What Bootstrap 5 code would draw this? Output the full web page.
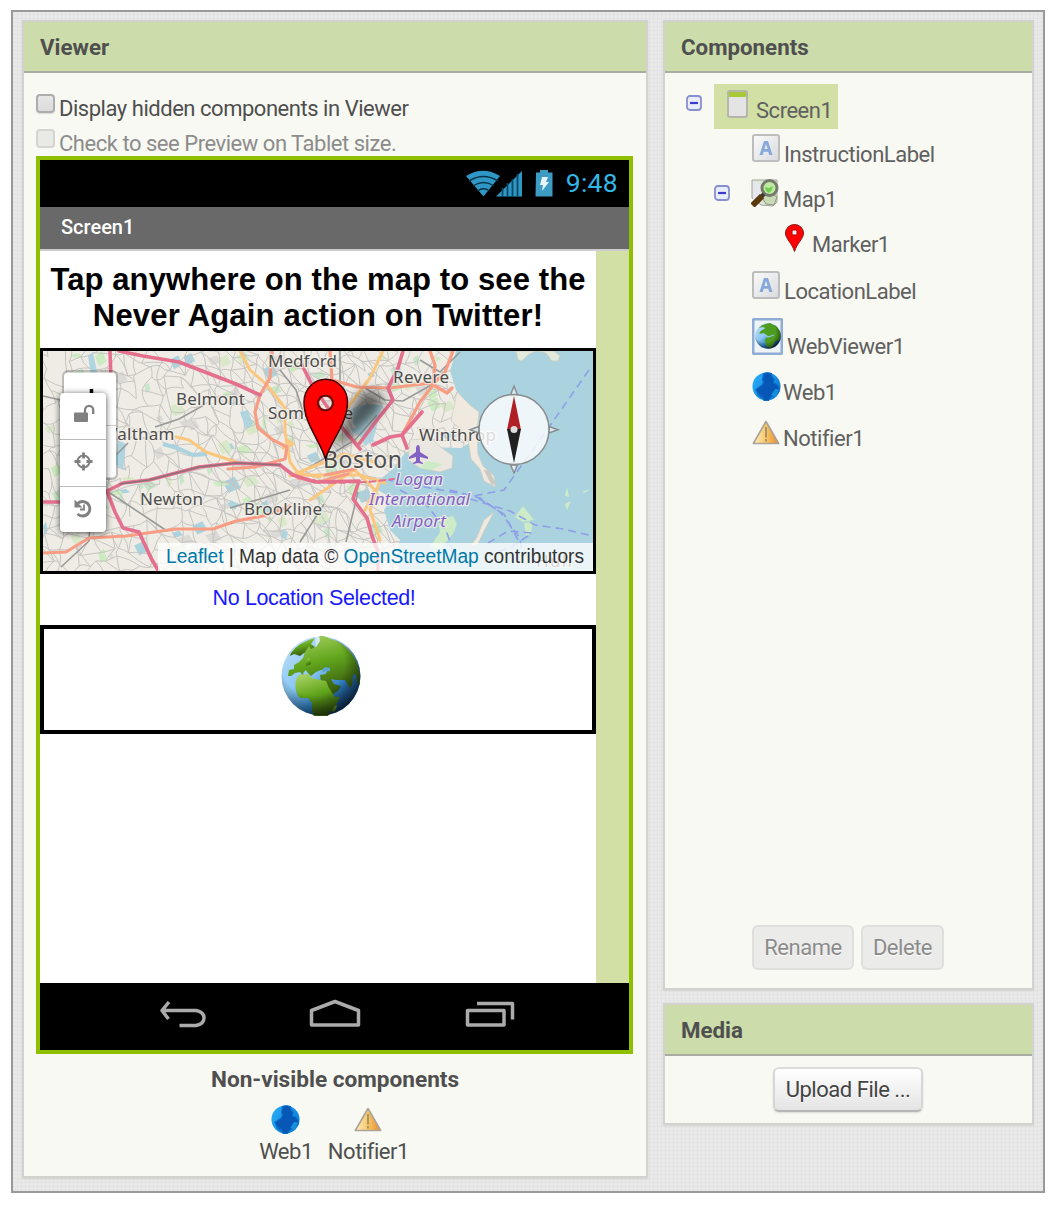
<!DOCTYPE html>
<html lang="en">
<head>
<meta charset="utf-8">
<title>App Inventor Designer</title>
<link href="https://cdn.jsdelivr.net/npm/bootstrap@5.3.0/dist/css/bootstrap.min.css" rel="stylesheet">
<style>
body{font-family:Roboto,sans-serif;font-size:22px;letter-spacing:-.47px;color:#4f4f4f;background:#fff;line-height:35px}
svg{display:block;flex:none;letter-spacing:0}
.workspace{width:1034px;height:1183px;margin:10px 0 0 11px;border:2px solid #9a9a9a;padding:8px 9px;gap:15px;
 background:repeating-linear-gradient(90deg,rgba(0,0,0,.022) 0 1px,transparent 1px 4px),repeating-linear-gradient(0deg,rgba(0,0,0,.022) 0 1px,transparent 1px 4px),#e9e9e9}
.panel{border:2px solid #d2d3ce;background:#f8f9f2;box-shadow:0 1px 2px rgba(0,0,0,.08)}
.panel-title{height:51px;background:#ccdcaa;border-bottom:2px solid #a9aca1;padding:0 16px;font-weight:700;line-height:51px;font-size:22.300px;letter-spacing:0}
.viewer{width:626px;height:1158px}
.side{width:371px}
.comps{height:970px}
.media{height:122px;margin-top:13px}
.fake-check{width:19px;height:19px;border:2px solid #adadad;border-radius:4px;background:linear-gradient(#e6e6e6,#dcdcdc);box-shadow:0 1px 1px rgba(0,0,0,.12);margin:3px 4px 0 0}
.fake-check.off{border-color:#d4d4d0;background:#e9e9e6;box-shadow:none}
.opt{height:35px;margin-left:12px}
.phone{width:597px;height:898px;margin-left:12px;border:4px solid #8fc000;background:#fff}
.statusbar{height:47px;background:#000;color:#33b5e5;padding-right:11px}
.clock{font-size:26.500px;letter-spacing:.3px;line-height:44px;padding-bottom:2px}
.appbar{height:44px;background:#696969;border-bottom:2px solid #ccc;color:#fff;padding-left:21px;font-weight:500;font-size:20px;line-height:40px;letter-spacing:0}
.screen{height:732px;background:#d2dfa5}
.form{width:556px;background:#fff;font-family:"Liberation Sans",sans-serif;letter-spacing:0}
.headline{font-size:31px;font-weight:700;line-height:36px;color:#000;height:97px;padding-top:11px;text-align:center;white-space:nowrap;letter-spacing:.1px}
.headline .second{letter-spacing:.2px}
.mapbox{height:226px;border:3px solid #000}
.loc{height:51px;text-align:center;color:#1a1aff;font-size:21.500px;line-height:48px;padding-right:8px;letter-spacing:-.35px}
.webbox{height:109px;border:4px solid #000;padding:0 0 7px 6px}
.navkeys{height:67px;background:#000}
.hid-title{font-weight:700;font-size:22.600px;line-height:51px;text-align:center;letter-spacing:0}
.node{padding-left:87px}
.node svg{margin-bottom:11px}
.node span{line-height:34px;color:#606060;position:relative;top:-1.500px}
.picked{background:#d2dfa5;height:45px;width:124px;padding-left:13px}
.gbtn{height:45px;border:2px solid #dfdfdc;border-radius:6px;background:#ebebe9;color:#8b8b8b;line-height:42px;text-align:center;padding:0;text-shadow:0 1px #fff;letter-spacing:-.47px}
.gbtn.live{border-color:#dcdcdc #d6d6d6 #b5b5b5;background:linear-gradient(#fff,#e4e4e4);color:#444;box-shadow:0 1px 2px rgba(0,0,0,.12)}
.maptext{font-family:"Noto Sans",sans-serif;fill:#4d4d4d;stroke:#f4f1ea;stroke-width:2.500px;stroke-opacity:.8;paint-order:stroke;stroke-linejoin:round}
</style>
<script src="https://cdn.jsdelivr.net/npm/bootstrap@5.3.0/dist/js/bootstrap.bundle.min.js"></script>
</head>
<body>
<svg width="0" height="0" class="position-absolute">
 <defs>
  <linearGradient id="lg" x2="1" y2="1"><stop stop-color="#fafafa"/><stop offset="1" stop-color="#d9dade"/></linearGradient>
  <linearGradient id="sea" x1=".1" y1=".1" x2=".8" y2="1"><stop stop-color="#b9dcf5"/><stop offset=".4" stop-color="#8cc8f4"/><stop offset=".7" stop-color="#2d7ec2"/><stop offset="1" stop-color="#0a2a55"/></linearGradient>
  <linearGradient id="land" x1=".3" y1="0" x2=".6" y2="1"><stop stop-color="#a5d060"/><stop offset=".45" stop-color="#61a51b"/><stop offset="1" stop-color="#33520f"/></linearGradient>
  <radialGradient id="shade" cx=".4" cy=".35" r=".66"><stop offset=".6" stop-opacity="0"/><stop offset="1" stop-opacity=".5"/></radialGradient>
  <linearGradient id="blue" x2="1" y2=".6"><stop stop-color="#2bb0fa"/><stop offset="1" stop-color="#0c7fd6"/></linearGradient>
  <linearGradient id="amber" x2="1"><stop stop-color="#fdeec5"/><stop offset=".5" stop-color="#f8c765"/><stop offset="1" stop-color="#e8892a"/></linearGradient>
  <filter id="soft" x="-40%" y="-40%" width="180%" height="180%"><feGaussianBlur stdDeviation="6"/></filter>
  <symbol id="i-a" viewBox="0 0 28 28"><rect x="1" y="1" width="26" height="26" rx="2" fill="url(#lg)" stroke="#bdbdbd" stroke-width="2"/><path d="M7.500 21 12 7h4l4.500 14h-3.300l-.9-3.200h-4.600l-.9 3.200zM12.400 15h3.200L14 9.800z" fill="#86a9da"/></symbol>
  <symbol id="i-min" viewBox="0 0 16 16"><rect x="1" y="1" width="14" height="14" rx="3" fill="#e9ecfb" stroke="#8790cc" stroke-width="1.800"/><path d="M4 8h8" stroke="#3a3ad0" stroke-width="2.200"/></symbol>
  <symbol id="i-globe" viewBox="0 0 80 80"><circle cx="40" cy="40" r="39.500" fill="url(#sea)"/>
   <path d="M34 1.500q8-2 16 1.500l-2 10-10 8-4-3 1-8z" fill="#d3eaf3"/>
   <g fill="url(#land)"><path d="M10 17Q18 6 34 2l-4 6 4 3-5 4-6 2-4 3-6-2-4 2z"/><path d="M50 3C66 7 79 24 79 42l-1 8-2-4-1-8-3 1-1 10-2 3-5-8-9 0-5-1 3 5 7 2-3 5-8 5-4-5-5-9-1-7 6-1 1-3-6-1-5 2-5 4-4-4-1-2-3 3 2 5-5-6-5 1-4 3-3 0 1-6 5-1 0-4 5-3 4-4 2-6 4-6 2 3 5-2 4-6-1-7z"/><path d="M18 39l9-1 4 4 8 2 6 1 3 7 6 9h5l-4 8-6 7-2 4c-4 3-12 3-14 1l-2-7 0-7-4-5-8 0c-6-6-6-19-1-23z"/><path d="M51 74l3-4 2-1-1 5-3 3z"/><path d="M25 26l2-4 2 1 1 5-5 2z"/></g>
   <path d="M41 34l3-3 5 1 0 3-7 1z" fill="#5ea5d6"/>
   <circle cx="40" cy="40" r="39.500" fill="url(#shade)"/></symbol>
  <symbol id="i-web" viewBox="0 0 30 30"><circle cx="15" cy="15" r="14.500" fill="url(#blue)"/><path d="M12 1.500q4-1.500 8 0l1 4 2 2-1 4 3 1 3 3q1 5-2 6l-3 1-4 4-2 3q-4 1-5-.5l-1-4-5-3-2-4q3-2 6-4l2-3-1-3z" fill="#0657b6" stroke="#0b6cc8" stroke-width="1.200"/><path d="M5 23q4-1 9 5l-4-.5z" fill="#0b66c2"/><path d="M24 17.500q3 0 4 1l-4 7-4-2z" fill="#1490df"/></symbol>
  <symbol id="i-warn" viewBox="0 0 28 25"><path d="M14 1.500 26.700 23.500H1.300z" fill="url(#amber)" stroke="#aaa39a" stroke-width="1.600" stroke-linejoin="round"/><path d="M14 7v10.500M14 19v2.500" stroke="#9a8c72" stroke-width="1.700"/></symbol>
 </defs>
</svg>

<main class="workspace d-flex align-items-start">
 <section class="panel viewer">
  <div class="panel-title">Viewer</div>
  <div style="height:18px"></div>
  <div class="opt d-flex"><i class="fake-check"></i><span>Display hidden components in Viewer</span></div>
  <div class="opt d-flex" style="height:30px;color:#8c8c8c"><i class="fake-check off"></i><span>Check to see Preview on Tablet size.</span></div>
  <div class="phone">
   <div class="statusbar d-flex align-items-center justify-content-end">
    <svg width="90" height="34" viewBox="466 165 90 34" fill="#2f97c6">
     <path d="M467 174q17-10.500 34 0L484.500 194.500z"/>
     <g fill="none" stroke="#0a3245" stroke-width="1.500"><path d="M470 179q14.500-9 29 0"/><path d="M474 184q10.500-7 21 0"/><path d="M478.500 189q6-4.500 12 0"/></g>
     <path d="M497 194.500 523 169v25.500z"/><path d="M503.500 186v9M508.500 181v14M513.500 177v18M518.500 172v23" stroke="#0b4862" stroke-width="1.800"/>
     <path d="M537 170.500h4v-2.500h8v2.500h4.500v24h-17z" fill="#3c9cc4"/><path d="M543 175h6l-2 5h3l-7 9 1-6h-3z" fill="#e8f5fb"/>
    </svg>
    <span class="clock" style="margin-left:11px">9:48</span>
   </div>
   <div class="appbar">Screen1</div>
   <div class="screen">
    <div class="form h-100">
     <div class="headline">Tap anywhere on the map to see the<br><span class="second">Never Again action on Twitter!</span></div>
     <div class="mapbox">
      <svg width="550" height="220" viewBox="43 351 550 220">
       <rect x="43" y="351" width="550" height="220" fill="#efece5"/>
       <g id="parks"></g>
       <g id="streets" fill="none" stroke="#c6c5c2" stroke-width="1"></g>
       <g fill="#aad3df">
        <path d="M456 351l-6 20 6 19 13 15 10 7-3 20-3 9-12 7-32-1-24 6-12 16-15 12-2 8 16 9-8 12 6 20 10 10-3 9 2 24H593V351z"/>
        <path d="M353 408l14-4 16 1-4 12-6 24-8 5-7-14-5-10zM88 356l5-4 4 20-6 4zM118 440l8 4-3 26-8-6zM240 412l8-2 5 14-7 5zM283 529l5 3-2 8-5-3zM230 500l9 4-4 6-7-4z" opacity=".9"/>
        <path d="M163 444l14 4 16 7 14-1" fill="none" stroke="#aad3df" stroke-width="4"/>
       </g>
       <g fill="#efe9df" stroke="#cfcabc" stroke-width=".7">
        <path d="M457 392l14 14 8 6-2 20 1 22 5 12 11 10 1 11-11-6-4-12-9-10-3-20-5-8-12-10z"/>
        <path d="M484 470l5 1 6 12-3 2z" fill="#ccc8c4"/>
        <path d="M410 440l20-2 12 10 11 8-1 12-12 4-20-4-12-8z" fill="#e9e7df"/>
        <path d="M494 512l-10 8-7 17-7 10 8-3 6-13z"/><path d="M516 351l2 9 4 1 6-6 8-4zM538 351l8 2 6 8 6 0 2-5-6-5z" fill="#e2eadb"/>
       </g>
       <g fill="#cdebc6"><path d="M453 516l4 8-4 10-14 16-9-3 10-15-2-12zM523 506l11 14-11 2-8-5zM567 487l2 10-4-1zM565 504l6-3-4 9zM583 491l8-2-7 4zM524 523l9-1-2 11-5 4zM427 461l16 3-12 6-12-2z"/></g>
       <g fill="none" stroke="#8e9fe8" stroke-width="1.600" stroke-dasharray="8 5">
        <path d="M589 370l-35 50-50 70-30 6-44-8-42-8"/><path d="M470 499l40 12 25 14 28 4 30 7"/><path d="M450 490l30 8 20 14 20 26 3 22"/><path d="M400 490l26 14 20 26 10 30"/><path d="M488 543l20-12 24 2-20 14-24 8"/><path d="M478 498l26 16 14 26"/>
       </g>
       <g fill="none" stroke="#9a9a98" stroke-width="1.600">
        <path d="M43 396l22 5M61 567l28-26 1-14M117 454l11-11M155 427l24-8 25-14M107 491l60 40 M280 370l16 20 8 25M230 508l60-18M358 492l-12 50M300 542l24-38M340 351v30M365 388l20 12 18 1 30-17M420 360l20 12 20-20M305 470l50-30 22-25"/>
       </g>
       <g fill="none" stroke-linecap="round" stroke-linejoin="round">
        <g stroke="#fbc77f" stroke-width="3"><path d="M176 437l13 3 17 12 30 10M240 351l10 19 17 15 18 23v24l5 30 8 11 22 4M383 351l-13 27-23 30M287 440l6 4-10 4M290 476l54-22 30 8M300 475l60 0 25 8M355 470l20 20-10 20M310 500l44-30M380 480l-10 30 10 30"/></g>
        <g stroke="#f79d83" stroke-width="3.200"><path d="M43 553l23-1 23-14 37-2 50-7h37l23-8 27-5 27-10M272 351l-2 27-10 17-5 17 3 16 15 12 14 7-2 12-30 8-27 2M330 351l2 29 25 7 33 1 40-5 17 10 5-5M430 351l5 14-2 20-13 17-18 33M453 351l-8 21-12 12M298 478l20 4 30-8M325 475l30-6"/></g>
        <g stroke="#e4708d" stroke-width="3.600"><path d="M119 351l24 5 36 6 57 22 24 11M110 351l1 30M107 491l8 21 8 16 16 4 12 26 8 14M43 502h20M107 491l16-8 26-3 27-7 23-6 37-4 44 2 13 10 22 7"/><path d="M302 365l10 20 28 40 20 24M317 482l42-1-6 18 14 19 5 18 6 16v19M403 351l-5 17-10 20 5 12-16 20-18 24M373 445l17-8 12-2 5 13M402 435l20-23"/></g>
        <path d="M120 484l29-4 27-7 23-6 37-4 44 2" stroke="#8b7178" stroke-width="1.600"/>
        <path d="M300 478l28 5 40-1 26-3" stroke="#e4708d" stroke-width="2" stroke-dasharray="6 4"/>
       </g>
       <g class="maptext" font-size="17">
        <text x="268" y="367" textLength="69">Medford</text><text x="393" y="383" textLength="56">Revere</text><text x="176" y="405" textLength="69">Belmont</text><text x="268" y="419" textLength="85">Somerville</text><text x="101.500" y="439.500" textLength="73">Waltham</text><text x="419" y="441" textLength="77">Winthrop</text><text x="140" y="505" textLength="63">Newton</text><text x="244" y="515" textLength="78">Brookline</text>
        <text x="323" y="468" font-size="23" textLength="79">Boston</text><text x="536" y="567" textLength="36">Hull</text>
        <g font-style="italic" style="fill:#8461c4"><text x="395" y="485" textLength="48">Logan</text><text x="369" y="505" textLength="101">International</text><text x="392" y="527" textLength="54">Airport</text></g>
       </g>
       <path d="M418 445c-2 0-2 3-2 7l-7 5v2l7-2v4l-3 2v1l5-1 5 1v-1l-3-2v-4l8 2v-2l-8-5c0-4 0-7-2-7z" fill="#8461c4"/>
       <path d="M330 452l24-48 10-14 20 6-6 16-20 18z" filter="url(#soft)" opacity=".6"/>
       <path d="M325.500 459c-5-18-21.500-35-21.500-57a21.500 22.500 0 0 1 43.500 0c0 22-17 39-22 57zM325.500 395.500a7.500 7.500 0 1 0 .01 0z" fill="#f00" fill-rule="evenodd" stroke="#3c0000" stroke-width="1.500"/><circle cx="325.500" cy="403" r="7" fill="none" stroke="#7a1111" stroke-width="1.500"/>
       <g stroke="#898d8f" stroke-width="1.500" fill="#d9eaf0"><path d="M510.500 395l3.500-9 3.500 9zM510.500 465l3.500 8 3.500-8zM549 426.500l9 3.200-9 3.200zM479 426.500l-9 3.200 9 3.200z"/><circle cx="514" cy="429.500" r="35" fill="#fff" fill-opacity=".8"/></g>
       <path d="M514 396l7 34h-14z" fill="#b02024"/><path d="M507 429h14l-7 34z" fill="#202020"/><circle cx="514" cy="429.500" r="3.500" fill="#ddd"/>
       <rect x="62" y="370" width="56" height="110" rx="6" fill="#000" fill-opacity=".2"/><rect x="64" y="372.500" width="52" height="105" rx="4" fill="#fff"/><path d="M91.500 389v8" stroke="#000" stroke-width="3.500"/><path d="M64 425.500h52" stroke="#ccc"/>
       <rect x="60" y="393" width="46" height="139" rx="4" style="filter:drop-shadow(0 1px 3px rgba(0,0,0,.7))" fill="#fff"/><path d="M60 439.500h46M60 486.500h46" stroke="#bbb" stroke-width="1.200"/>
       <g fill="none" stroke="#808080"><rect x="74" y="412.500" width="14" height="9.500" rx="1" fill="#808080" stroke="none"/><path d="M85 413v-3a4.100 4.100 0 0 1 8.200 0v4" stroke-width="2.300"/><circle cx="83.500" cy="461.500" r="6" stroke-width="2"/><path d="M83.500 452.500v6M83.500 464.500v6M74.500 461.500h6M86.500 461.500h6" stroke-width="2.800"/><path d="M77.500 503.500a7.300 7.300 0 1 1 0 10.500" stroke-width="2.900"/><path d="M84 504.500v5h-4" stroke-width="1.800"/><path d="M74.500 499.500v8h8z" fill="#808080" stroke="none"/></g>
       <rect x="158" y="543" width="435" height="28" fill="#fff" fill-opacity=".76"/>
       <text x="166" y="563" font-family="Liberation Sans" font-size="20" fill="#333" textLength="418" lengthAdjust="spacingAndGlyphs"><tspan fill="#0078a8">Leaflet</tspan> | Map data © <tspan fill="#0078a8">OpenStreetMap</tspan> contributors</text>
      </svg>
     </div>
     <div class="loc">No Location Selected!</div>
     <div class="webbox d-flex justify-content-center align-items-center"><svg width="80" height="80"><use href="#i-globe"/></svg></div>
    </div>
   </div>
   <div class="navkeys">
    <svg width="589" height="67" viewBox="40 983 589 67" fill="none" stroke="#ababab" stroke-width="3.500" stroke-linejoin="round"><path d="M169 1002l-7 8.500 6.500 8.500M162 1010.500h34q8 1.500 8 7.500t-8 7.500h-16.500"/><path d="M311.500 1025v-14.500l23.500-9 23.500 9V1025z"/><path d="M467.500 1010.500h36.500v14.500h-36.500zM477 1003.500h35.500v16"/></svg>
   </div>
  </div>
  <div class="hid-title">Non-visible components</div>
  <div class="d-flex justify-content-center" style="gap:15px;line-height:36px;margin-right:2px">
   <div class="d-flex flex-column align-items-center"><svg width="29" height="29"><use href="#i-web"/></svg><span>Web1</span></div>
   <div class="d-flex flex-column align-items-center"><svg width="28" height="25" style="margin:2px 0"><use href="#i-warn"/></svg><span>Notifier1</span></div>
  </div>
 </section>

 <aside class="side">
  <section class="panel comps d-flex flex-column">
   <div class="panel-title">Components</div>
   <div class="d-flex align-items-end" style="height:56px;padding-left:21px"><svg width="16" height="16" style="margin:0 12px 18px 0"><use href="#i-min"/></svg>
    <div class="node picked d-flex align-items-end"><svg width="21" height="28" viewBox="0 0 21 28"><rect x="1" y="1" width="19" height="26" rx="2" fill="#e4e4e4" stroke="#b5b5ab" stroke-width="2"/><path d="M2 2h17v5H2z" fill="#a6c935"/></svg><span style="margin-left:8px">Screen1</span></div></div>
   <div class="node d-flex align-items-end" style="height:44px"><svg width="28" height="28"><use href="#i-a"/></svg><span style="margin-left:4px">InstructionLabel</span></div>
   <div class="d-flex align-items-end node" style="height:45px;padding-left:49px"><svg width="16" height="16" style="margin:0 21px 17px 0"><use href="#i-min"/></svg><svg width="28" height="28" viewBox="0 0 28 28"><path d="M1 1h25v22l-4 4-12-1-9-7z" fill="#dfe6d6" stroke="#a3a59c"/><path d="M2 2l7 3v14l-7 3z" fill="#e6e6ee"/><path d="M10 17l10-3 6 4-3 8-8-1z" fill="#c9dbb4" stroke="#8f9683"/><circle cx="18.500" cy="9" r="7.500" fill="#bfeaa2" stroke="#757a6e" stroke-width="3"/><path d="M14 8l4 1 4-2-1 4-3 3-3-2z" fill="#72cf55"/><path d="M13 15l-3 3" stroke="#3c3c34" stroke-width="4"/><path d="M11 17L1.500 26.500" stroke="#59390d" stroke-width="6"/></svg><span style="margin-left:4px">Map1</span></div>
   <div class="node d-flex align-items-end" style="height:45px;padding-left:120px"><svg width="19" height="28" viewBox="0 0 19 28"><path d="M9.500 27.500C7 19 .5 15 .5 9a9 8.500 0 0 1 18 0c0 6-6.500 10-9 18.500z" fill="#f00" stroke="#8a1a14"/><rect x="7" y="6" width="5" height="5" rx="1.500" fill="#eee" stroke="#a00"/></svg><span style="margin-left:8px">Marker1</span></div>
   <div class="node d-flex align-items-end" style="height:47px"><svg width="28" height="28"><use href="#i-a"/></svg><span style="margin-left:4px">LocationLabel</span></div>
   <div class="node d-flex align-items-end" style="height:55px"><svg width="31" height="37" viewBox="0 0 31 37" style="margin-bottom:10px"><rect x="1.200" y="1.200" width="28.600" height="34.600" rx="1" fill="#eef3f6" stroke="#8fadd6" stroke-width="2.600"/><circle cx="16" cy="18" r="12.800" fill="url(#sea)"/><path d="M7 10q5-5 11-5l6 3q5 5 4.500 10l-1 4-4 1q-2 5-5 7l-4-2-2-6 3-4-4-3-4 1q0-3 3-4l3-2-3-1z" fill="#4f9d20"/><path d="M12 16l4 3 6-2" stroke="#8cc8e4" fill="none" stroke-width="1.300"/><circle cx="16" cy="18" r="12.800" fill="url(#shade)"/></svg><span style="margin-left:4px">WebViewer1</span></div>
   <div class="node d-flex align-items-end" style="height:46px"><svg width="29" height="29" style="margin-bottom:10px"><use href="#i-web"/></svg><span style="margin-left:2px">Web1</span></div>
   <div class="node d-flex align-items-end" style="height:46px"><svg width="28" height="25" style="margin-bottom:12px"><use href="#i-warn"/></svg><span style="margin-left:3px">Notifier1</span></div>
   <div class="d-flex mt-auto" style="gap:7px;margin:0 0 18px 87px"><button class="gbtn" style="width:102px">Rename</button><button class="gbtn" style="width:83px">Delete</button></div>
  </section>
  <section class="panel media">
   <div class="panel-title">Media</div>
   <button class="gbtn live d-block" style="width:150px;margin:11px 0 0 108px">Upload File ...</button>
  </section>
 </aside>
</main>
<script>
// Deterministic street mesh and parkland for the base map
let seed=7;const rnd=()=>(seed=(seed*16807)%2147483647)/2147483647;
let d='';const P=[];const s=12;
for(let r=0;r<21;r++){P.push([]);for(let c=0;c<38;c++)P[r].push([38+c*s+(rnd()-.5)*12,346+r*s+(rnd()-.5)*12]);}
const q=(a,b)=>`M${a.map(n=>n.toFixed(1))}Q${((a[0]+b[0])/2+(rnd()-.5)*7).toFixed(1)} ${((a[1]+b[1])/2+(rnd()-.5)*7).toFixed(1)} ${b.map(n=>n.toFixed(1))}`;
for(let r=0;r<20;r++)for(let c=0;c<37;c++){
 if(rnd()<.8)d+=q(P[r][c],P[r][c+1]);
 if(rnd()<.8)d+=q(P[r][c],P[r+1][c]);
 const x=P[r][c][0];
 if(rnd()<(x>200&&x<390?.8:.25))d+=q(P[r][c],P[r+1][c+1]);
}
document.getElementById('streets').innerHTML=`<path d="${d}"/>`;
let g='';
for(let i=0;i<150;i++){const x=43+rnd()*400,y=351+rnd()*220,w=3+rnd()*9,h=3+rnd()*8;
 g+=`<path d="M${x} ${y}l${w} ${-h/2} ${w/2} ${h} ${-w} ${h/2}z" fill="${['#cdebc0','#d8e8c8','#c8e6c8','#dcdad6','#aad3df'][i%5]}"/>`;}
document.getElementById('parks').innerHTML=g;
</script>
</body>
</html>
